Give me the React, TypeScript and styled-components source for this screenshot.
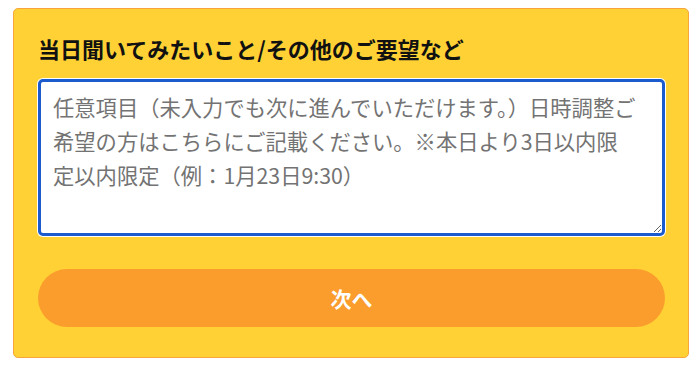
import React from "react";
import styled, { createGlobalStyle } from "styled-components";

const GlobalStyle = createGlobalStyle`
  * { box-sizing: border-box; }
  html, body { margin: 0; padding: 0; background: #ffffff; }
  body {
    font-family: "Noto Sans CJK JP", "Noto Sans", sans-serif;
    -webkit-font-smoothing: antialiased;
  }
`;

const Page = styled.div`
  padding: 8px 11px 21px 13px;
`;

const Panel = styled.section`
  width: 676px;
  height: 350px;
  background: #ffd135;
  border: 1px solid #f8a53b;
  border-radius: 5px;
  padding: 23px 23px 29px 24px;
  display: flex;
  flex-direction: column;
`;

const Title = styled.h2`
  margin: 0;
  font-size: 22px;
  line-height: 32px;
  font-weight: 700;
  color: #111111;
`;

const TextArea = styled.textarea`
  margin-top: 15px;
  width: 627px;
  height: 157px;
  padding: 8px 10px 8px 12px;
  border: 3px solid #1b5bcd;
  border-radius: 5px;
  box-shadow: 0 0 0 1px #ffffff;
  background: #ffffff;
  font-family: "Noto Sans CJK JP", "Noto Sans", sans-serif;
  font-size: 21.3px;
  line-height: 34px;
  color: #333333;
  resize: vertical;
  outline: none;
  &::placeholder {
    color: #737373;
    opacity: 1;
  }
`;

const NextButton = styled.button`
  margin-top: 33px;
  width: 627px;
  height: 58px;
  border: none;
  border-radius: 29px;
  background: #fb9d2d;
  color: #ffffff;
  font-family: "Noto Sans CJK JP", "Noto Sans", sans-serif;
  font-size: 21px;
  font-weight: 700;
  cursor: pointer;
  display: flex;
  align-items: center;
  justify-content: center;
`;

const placeholderText =
  "任意項目（未入力でも次に進んでいただけます。）日時調整ご\n" +
  "希望の方はこちらにご記載ください。※本日より3日以内限\n" +
  "定以内限定（例：1月23日9:30）";

export default function App() {
  return (
    <>
      <GlobalStyle />
      <Page>
        <Panel>
          <Title>当日聞いてみたいこと/その他のご要望など</Title>
          <TextArea placeholder={placeholderText} />
          <NextButton type="button">次へ</NextButton>
        </Panel>
      </Page>
    </>
  );
}
